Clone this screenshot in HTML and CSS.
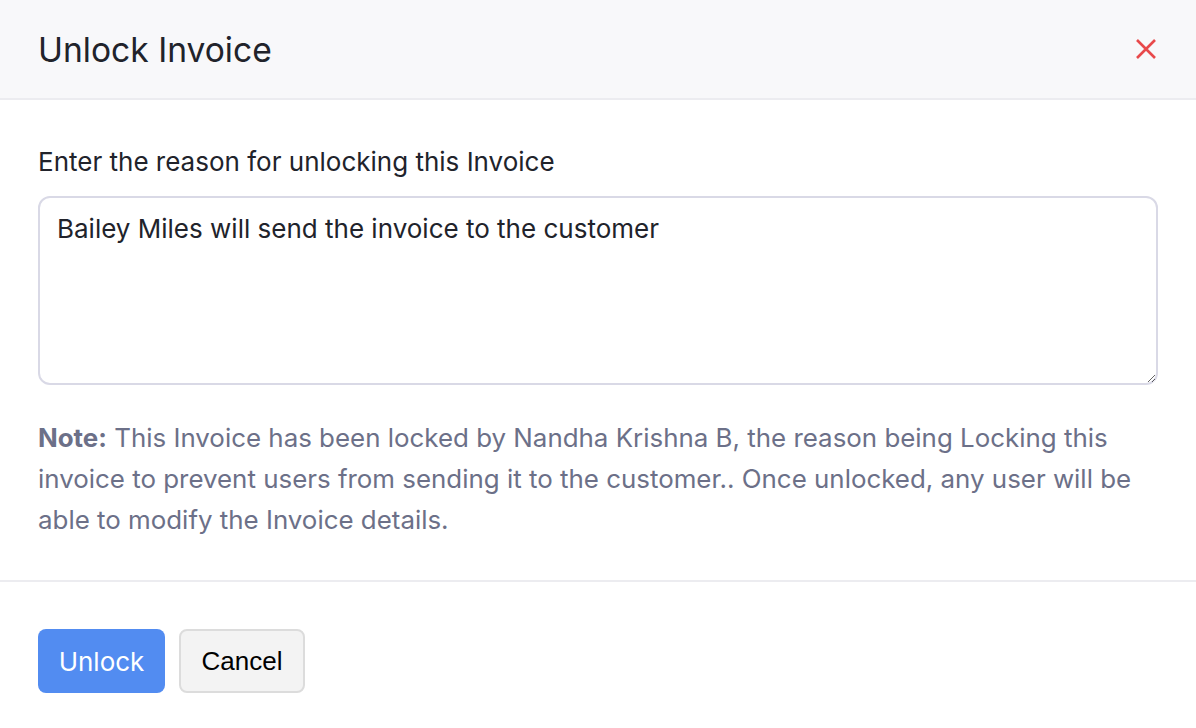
FILE: index.html
```html
<!DOCTYPE html>
<html lang="en">
<head>
    <meta charset="UTF-8">
    <meta name="viewport" content="width=device-width, initial-scale=1.0">
    <title>Unlock Invoice</title>
    <link rel="stylesheet" href="styles.css">
</head>
<body>
<div class="modal">
    <div class="modal-header">
        <h2>Unlock Invoice</h2>
        <button class="close-btn" aria-label="Close">
            <svg width="22" height="22" viewBox="0 0 22 22">
                <path d="M2 2 L20 20 M20 2 L2 20" stroke="#e8494b" stroke-width="2.6" stroke-linecap="butt"/>
            </svg>
        </button>
    </div>

    <div class="modal-body">
        <label for="reason">Enter the reason for unlocking this Invoice</label>
        <textarea id="reason">Bailey Miles will send the invoice to the customer</textarea>

        <p class="note">
            <b>Note:</b> This Invoice has been locked by Nandha Krishna B, the reason being Locking this invoice to prevent users from sending it to the customer.. Once unlocked, any user will be able to modify the Invoice details.
        </p>
    </div>

    <div class="modal-footer">
        <button class="btn btn-primary">Unlock</button>
        <button class="btn btn-secondary">Cancel</button>
    </div>
</div>
</body>
</html>
```

FILE: styles.css
```css
body {
    margin: 0;
    font-family: Inter, "Noto Sans", sans-serif;
    background-color: #fff;
    color: #21232b;
}

.modal {
    width: 1196px;
}

.modal-header {
    display: flex;
    align-items: center;
    justify-content: space-between;
    height: 100px;
    padding: 0 38px;
    background-color: #f8f8fa;
    border-bottom: 2px solid #ececf0;
    box-sizing: border-box;
}

.modal-header h2 {
    margin: 0;
    font-size: 33.6px;
    font-weight: 400;
    color: #21232b;
}

.close-btn {
    background: none;
    border: none;
    padding: 0;
    margin-right: 1px;
    cursor: pointer;
    display: flex;
}

.modal-body {
    padding: 40px 38px 40px;
}

label {
    display: block;
    font-size: 26px;
    line-height: 44px;
    margin-bottom: 12px;
}

textarea {
    display: block;
    width: 100%;
    height: 189px;
    box-sizing: border-box;
    padding: 11px 17px;
    font-family: Inter, "Noto Sans", sans-serif;
    font-size: 26px;
    line-height: 40px;
    color: #21232b;
    border: 2px solid #d9d9e6;
    border-radius: 12px;
    resize: vertical;
}

.note {
    margin: 32px 0 0;
    font-size: 25.9px;
    line-height: 41px;
    color: #6c7088;
}

.note b {
    font-weight: 700;
}

.modal-footer {
    display: flex;
    gap: 14px;
    padding: 47px 38px 35px;
    border-top: 2px solid #ececf0;
}

.btn {
    height: 64px;
    padding: 0 20px;
    font-size: 26px;
    border-radius: 8px;
    cursor: pointer;
}

.btn-primary {
    background-color: #528cf1;
    color: #fff;
    border: none;
    font-family: Inter, "Noto Sans", sans-serif;
    width: 127px;
}

.btn-secondary {
    background-color: #f3f3f3;
    color: #000;
    border: 2px solid #dcdcdc;
    font-family: "Liberation Sans", Arial, sans-serif;
    width: 126px;
}
```
